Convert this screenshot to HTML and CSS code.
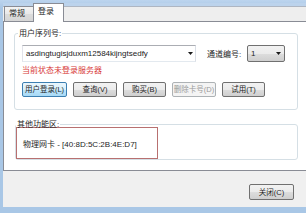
FILE: index.html
```html
<!DOCTYPE html>
<html>
<head>
<meta charset="utf-8">
<link rel="stylesheet" href="styles.css">
</head>
<body>
<div class="window">
  <div class="dialog">
    <div class="tabs">
      <div class="tab">常规</div>
      <div class="tab active">登录</div>
    </div>
    <div class="panel">
      <fieldset class="group g1">
        <legend>用户序列号:</legend>
        <div class="gbody">
          <div class="row">
            <div class="combo edit"><span>asdingtugisjduxm12584kijngtsedfy</span><svg class="arrow" width="5" height="3" viewBox="0 0 5 3"><path d="M0 0H5L2.5 3Z"/></svg></div>
            <span class="lbl">通道编号:</span>
            <div class="combo list"><span>1</span><svg class="arrow" width="5" height="3" viewBox="0 0 5 3"><path d="M0 0H5L2.5 3Z"/></svg></div>
          </div>
          <div class="status">当前状态未登录服务器</div>
          <div class="buttons">
            <button class="btn default w1">用户登录(L)</button>
            <button class="btn w2">查询(V)</button>
            <button class="btn w3">购买(B)</button>
            <button class="btn disabled w4">删除卡号(D)</button>
            <button class="btn w5">试用(T)</button>
          </div>
        </div>
      </fieldset>
      <fieldset class="group g2">
        <legend>其他功能区:</legend>
        <div class="mark">物理网卡 - [40:8D:5C:2B:4E:D7]</div>
      </fieldset>
    </div>
    <div class="footer">
      <button class="btn close">关闭(C)</button>
    </div>
  </div>
</div>
</body>
</html>
```

FILE: styles.css
```css
* { box-sizing: border-box; }
html, body { margin: 0; padding: 0; }
body {
  font-family: "Liberation Sans", "Noto Sans CJK SC", sans-serif;
  font-size: 8px;
  color: #1e1e1e;
}
.window {
  width: 306px;
  height: 213px;
  background: linear-gradient(#bcd4ee, #a9c7e6 8px, #a9c7e6);
  padding: 3px 0 6px 3px;
  overflow: hidden;
}
.dialog {
  width: 303px;
  height: 204px;
  background: #f0f0f0;
  display: flex;
  flex-direction: column;
  overflow: hidden;
}
.tabs {
  height: 18px;
  display: flex;
  align-items: flex-end;
  padding-left: 1px;
  background: linear-gradient(#bcd3ec 0, #bcd3ec 3px, #aeb6c2 3px, #aeb6c2 4px, #eeeeee 4px);
}
.tab {
  height: 15px;
  width: 30px;
  line-height: 14px;
  padding-left: 4px;
  border: 1px solid #898c95;
  border-bottom: none;
  background: linear-gradient(#f4f4f4, #e8e8e8 50%, #dcdcdc 51%, #d6d6d6);
  white-space: nowrap;
}
.tab.active {
  height: 19px;
  width: 31px;
  line-height: 16px;
  margin-left: -1px;
  margin-bottom: -1px;
  background: #fff;
  position: relative;
  z-index: 1;
}
.panel {
  width: 310px;
  height: 150px;
  background: #fff;
  border: 1px solid #898c95;
  padding-top: 6px;
}
.group {
  margin: 0 0 0 10px;
  padding: 0;
  width: 284px;
  border: 1px solid #d5dfe5;
  border-radius: 3px;
  min-inline-size: 0;
}
.group legend {
  line-height: 11px;
  padding: 0 1px;
  margin-left: 3px;
}
.gbody {
  padding: 6px 0 12px 7px;
}
.row {
  display: flex;
  align-items: center;
  height: 17px;
}
.combo {
  height: 17px;
  display: flex;
  align-items: center;
  justify-content: space-between;
}
.combo.edit {
  width: 174px;
  background: #fff;
  border: 1px solid #abadb3;
  border-color: #abadb3 #dbdfe6 #e3e9ef #e2e3ea;
  padding: 0 2px 0 3px;
  color: #222;
}
.combo.list {
  width: 38px;
  border: 1px solid #707070;
  border-radius: 2px;
  background: linear-gradient(#f2f2f2, #ebebeb 50%, #dddddd 51%, #cfcfcf);
  padding: 0 3px 0 3px;
}
.arrow { fill: #1a1a1a; display: block; }
.lbl {
  margin-left: 11px;
  width: 40px;
  white-space: nowrap;
}
.status {
  margin-top: 4px;
  line-height: 10px;
  color: #d83a3a;
}
.buttons {
  margin-top: 6px;
  display: flex;
  gap: 6px;
}
.btn {
  height: 15px;
  padding: 0;
  font-family: inherit;
  font-size: 7.5px;
  color: #1e1e1e;
  border: 1px solid #707070;
  border-radius: 2px;
  background: linear-gradient(#f2f2f2, #ebebeb 50%, #dddddd 51%, #cfcfcf);
  text-align: center;
  white-space: nowrap;
  line-height: 12px;
  overflow: hidden;
}
.btn.default {
  border-color: #3c7fb1;
  background: linear-gradient(#eaf6fd, #d9f0fc 50%, #bee6fd 51%, #a7d9f5);
}
.btn.disabled {
  border-color: #adb2b5;
  background: #f4f4f4;
  color: #9a9a9a;
}
.w1 { width: 45px; }
.w2 { width: 44px; }
.w3 { width: 43px; }
.w4 { width: 44px; }
.w5 { width: 43px; }
.g2 {
  margin-top: 9px;
  margin-left: 11px;
  width: 283px;
}
.g2 legend {
  margin-left: 0;
}
.mark {
  margin-top: -3px;
  width: 142px;
  height: 32px;
  border: 1px solid #b87070;
  padding-left: 6px;
  display: flex;
  align-items: center;
  white-space: nowrap;
}
.footer {
  flex: 1;
  display: flex;
  justify-content: flex-end;
  align-items: flex-start;
  padding: 13px 12px 0 0;
}
.btn.close {
  width: 45px;
  height: 16px;
  line-height: 13px;
}
```
